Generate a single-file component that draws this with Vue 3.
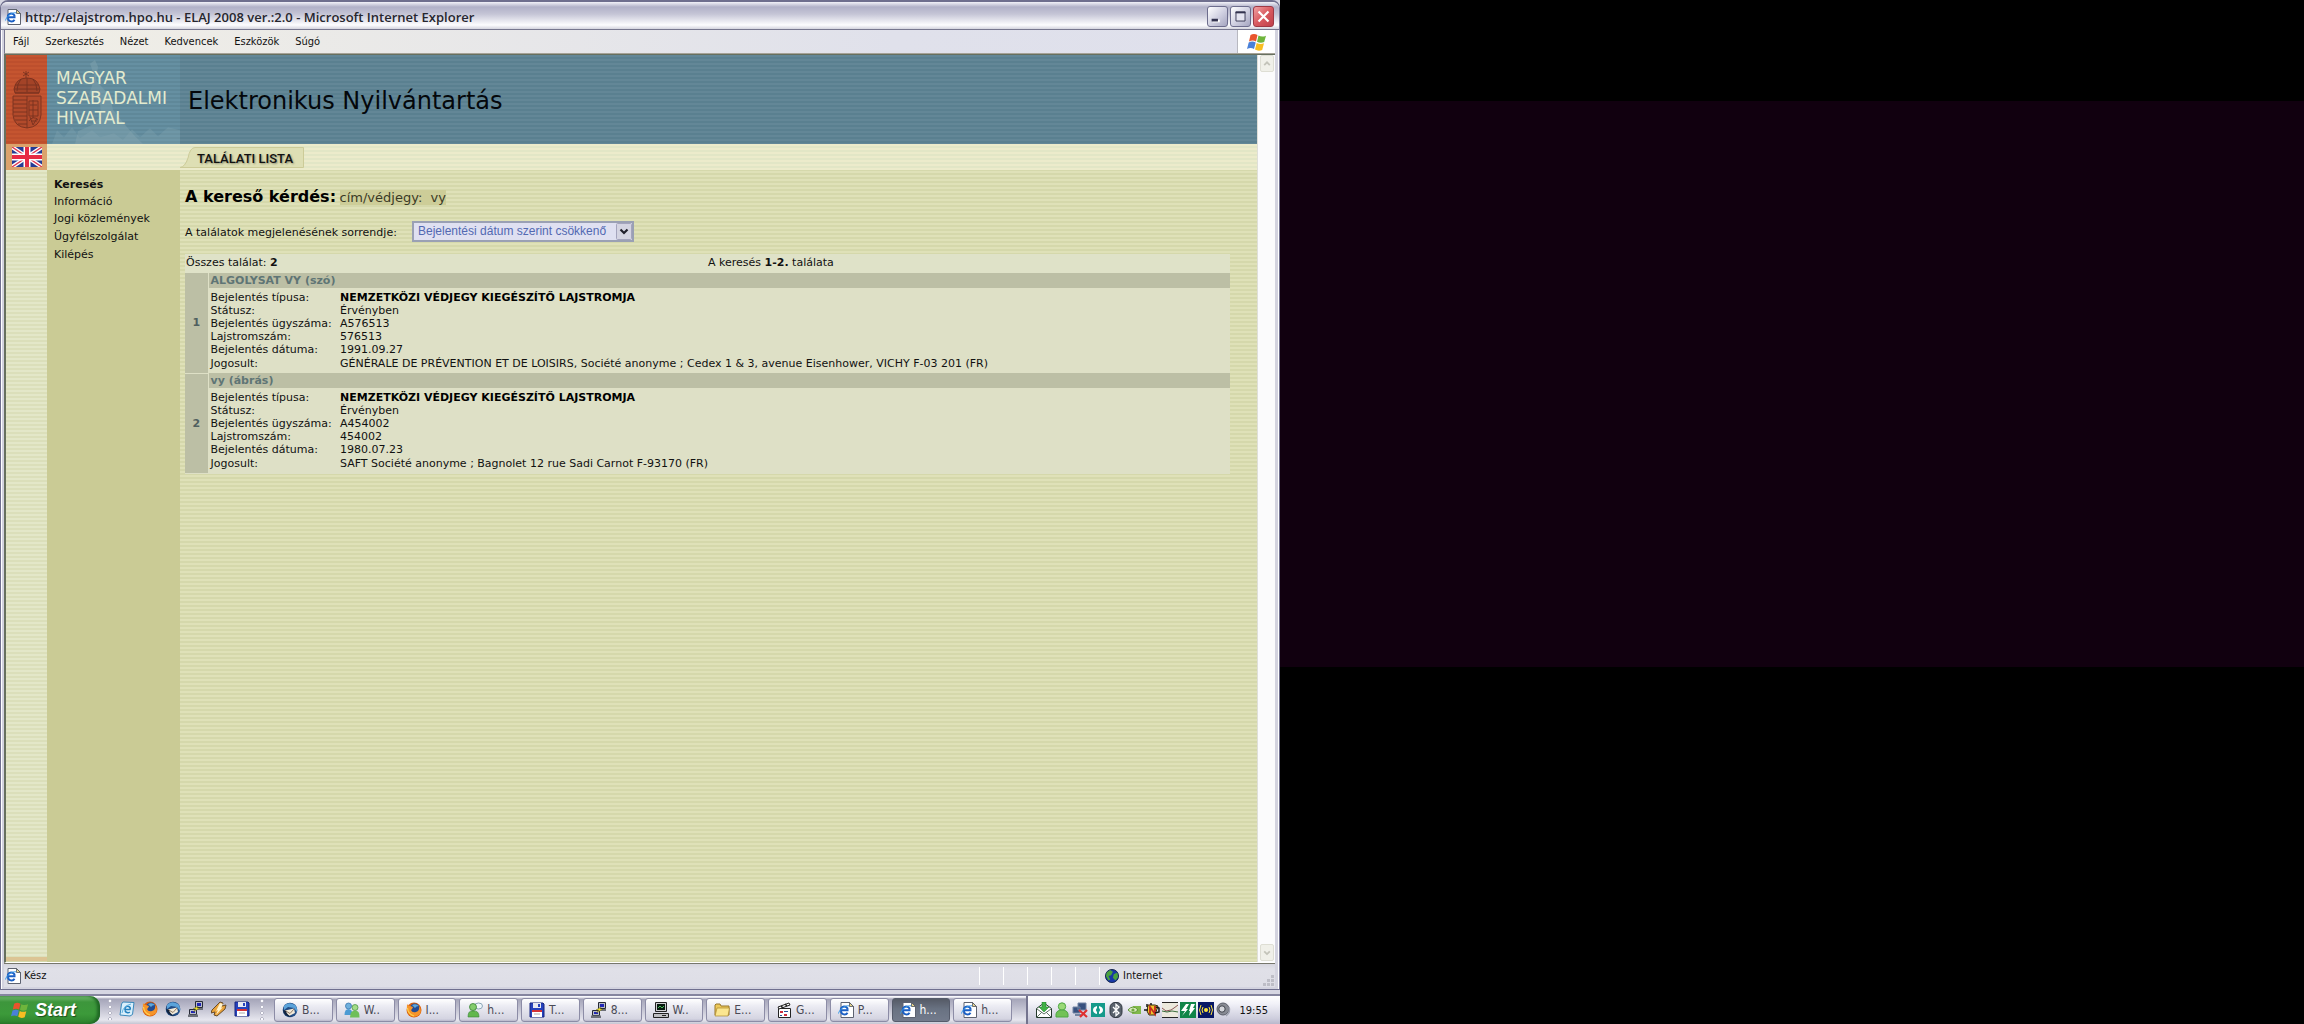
<script setup>
import { ref } from 'vue'

const menus = ['Fájl', 'Szerkesztés', 'Nézet', 'Kedvencek', 'Eszközök', 'Súgó']
const nav = ['Keresés', 'Információ', 'Jogi közlemények', 'Ügyfélszolgálat', 'Kilépés']
const order = ref('desc')

const results = [
  {
    title: 'ALGOLYSAT VY (szó)',
    rows: [
      ['Bejelentés típusa:', 'NEMZETKÖZI VÉDJEGY KIEGÉSZÍTŐ LAJSTROMJA'],
      ['Státusz:', 'Érvényben'],
      ['Bejelentés ügyszáma:', 'A576513'],
      ['Lajstromszám:', '576513'],
      ['Bejelentés dátuma:', '1991.09.27'],
      ['Jogosult:', 'GÉNÉRALE DE PRÉVENTION ET DE LOISIRS, Société anonyme ; Cedex 1 & 3, avenue Eisenhower, VICHY F-03 201 (FR)'],
    ],
  },
  {
    title: 'vy (ábrás)',
    rows: [
      ['Bejelentés típusa:', 'NEMZETKÖZI VÉDJEGY KIEGÉSZÍTŐ LAJSTROMJA'],
      ['Státusz:', 'Érvényben'],
      ['Bejelentés ügyszáma:', 'A454002'],
      ['Lajstromszám:', '454002'],
      ['Bejelentés dátuma:', '1980.07.23'],
      ['Jogosult:', 'SAFT Société anonyme ; Bagnolet 12 rue Sadi Carnot F-93170 (FR)'],
    ],
  },
]

const quick = ['outlook', 'firefox', 'bird', 'putty', 'winamp', 'floppy']
const tasks = [
  { icon: 'bird', label: 'B...' },
  { icon: 'people', label: 'W..' },
  { icon: 'firefox', label: 'I...' },
  { icon: 'chat', label: 'h...' },
  { icon: 'floppy', label: 'T...' },
  { icon: 'putty', label: '8...' },
  { icon: 'terminal', label: 'W..' },
  { icon: 'folder', label: 'E...' },
  { icon: 'clapper', label: 'G...' },
  { icon: 'page', label: 'P...' },
  { icon: 'page', label: 'h...', active: true },
  { icon: 'page', label: 'h...' },
]
const tray = ['mail', 'person', 'network', 'sync', 'bluetooth', 'nvidia', 'norton', 'chart', 'power', 'wireless', 'speaker']
</script>

<template>
  <svg class="symbols" aria-hidden="true">
    <symbol id="page" viewBox="0 0 16 16">
      <path d="M3 .5h8.500L15.500 4.500v11H3z" fill="#fff" stroke="#5d6270" />
      <path d="M11.500.500v4h4z" fill="#e6d58c" stroke="#4c525e" stroke-width=".8" />
      <path d="M10.500 8.200H2.800a3.400 3.400 0 1 1 6.900-.6M3 9.400a3.500 3.500 0 0 0 6.500 1.300" fill="none" stroke="#1b5fc4" stroke-width="2" />
      <path d="M.5 11.500C1 8 7 3 11 3.800" fill="none" stroke="#3b9be8" />
    </symbol>
    <symbol id="windows" viewBox="0 0 20 18">
      <path d="M3.500 2q3.500-2 7 0L9 8.500q-3.300-2-7 0z" fill="#e9542c" />
      <path d="M11.500 2.500q3.500 2 7.500.2L17.200 9q-3.700 1.700-7.200-.3z" fill="#6fb53c" />
      <path d="M1.700 9.600q3.600-2 7 0L7 16q-3.300-2-7 0z" fill="#4a80d8" />
      <path d="M9.700 10q3.500 2 7.300.3L15.200 17q-3.700 1.700-7.200-.4z" fill="#f8bd22" />
    </symbol>
    <symbol id="outlook" viewBox="0 0 16 16">
      <path d="M4 1l11 .5-1.500 12L11 15 1 14 2.500 3z" fill="#d9effb" stroke="#3988bb" />
      <path d="M11.500 8.500H6a2.700 2.700 0 1 1 5.300-.2M6 9.500a3 3 0 0 0 4.800 1.500" fill="none" stroke="#2581bf" stroke-width="1.600" />
      <path d="M3 12Q4 5 12 3" fill="none" stroke="#61b4e3" />
    </symbol>
    <symbol id="firefox" viewBox="0 0 16 16">
      <circle cx="8" cy="8" r="7.500" fill="#d9600e" />
      <circle cx="8.800" cy="6.500" r="5" fill="#244c92" />
      <path d="M6 3q4-2 7 1-3 0-4 2z" fill="#5da8dc" />
      <path d="M1 2q1 2 3 2l3 1-1 2-1 1q1 3 5 2 4-1 3-6 3 4 1 8-4 4-9 2Q0 11 1 2z" fill="#f6942a" />
      <path d="M1.500 6Q2 12 8 14" fill="none" stroke="#ffd34c" stroke-width="1.200" />
    </symbol>
    <symbol id="bird" viewBox="0 0 16 16">
      <circle cx="8" cy="8" r="7.300" fill="#224d86" />
      <path d="M2 4Q6-1 13 3q3 3 2 7l-3-4-6-1-4 3z" fill="#5ba3da" />
      <path d="M3 8.500l9-2 1 4.500-6 3-4-3z" fill="#f1ead9" />
      <path d="M3 8.500l5 3L12 7" fill="none" stroke="#917a66" />
      <path d="M1 8q1 7 9 7-5-2-6-6z" fill="#12233d" />
    </symbol>
    <symbol id="putty" viewBox="0 0 16 16">
      <path d="M7.500.5h7v6h-7zM1.500 8.500h7v5h-7z" fill="#b9bdc8" stroke="#262a36" />
      <path d="M9 2h4v3H9zM3 10h4v2H3z" fill="#2026b7" />
      <path d="M9 7h6v2H9zM0 13.500h10V16H0z" fill="#6d7079" />
      <path d="M10 5L5 8h3l-3 3 7-4H9z" fill="#f4e72b" stroke="#53501b" stroke-width=".4" />
    </symbol>
    <symbol id="winamp" viewBox="0 0 16 16">
      <path d="M9 1l3 1-1 3 4-1-1 4-8 7-3-1 1-3-4 1 1-3z" fill="#eaa33a" stroke="#674c2b" />
      <path d="M9 2L5 10l2-1-2 5 7-8-2 1 2-4z" fill="#fff2cc" />
    </symbol>
    <symbol id="floppy" viewBox="0 0 16 16">
      <path d="M1 1h13l1 1v13H1z" fill="#2642bd" stroke="#16257e" />
      <path d="M4 1h8v5H4z" fill="#e7e9f2" /><path d="M9 2h2v3H9z" fill="#2642bd" />
      <path d="M3 8h10v7H3z" fill="#fff" /><path d="M3 8h10v2H3z" fill="#d33336" />
      <path d="M5 12h6" stroke="#aaa" />
    </symbol>
    <symbol id="people" viewBox="0 0 16 16">
      <circle cx="4.500" cy="4" r="3" fill="#6fb0dd" stroke="#2d6da8" stroke-width=".7" />
      <path d="M.5 13q0-6 4-6t4 6z" fill="#4c9bd3" />
      <circle cx="11" cy="5.500" r="3" fill="#a3dc87" stroke="#3d8b38" stroke-width=".7" />
      <path d="M6 15.500q0-7 5-7t4.500 7z" fill="#6fbf59" />
    </symbol>
    <symbol id="chat" viewBox="0 0 16 16">
      <ellipse cx="11.500" cy="4" rx="4" ry="3" fill="#eff6fb" stroke="#8ba6b8" />
      <circle cx="6" cy="5" r="3.500" fill="#83cc6d" stroke="#398337" stroke-width=".8" />
      <path d="M1 15q0-7 5-6 6-1 6 6z" fill="#62b74d" stroke="#398337" stroke-width=".6" />
    </symbol>
    <symbol id="terminal" viewBox="0 0 16 16">
      <path d="M2.500.5h11v9h-11z" fill="#cdcdd0" stroke="#222" />
      <path d="M4 2h8v6H4z" fill="#07190e" /><path d="M5 6l2-2 2 2 2-2" fill="none" stroke="#48bc57" />
      <path d="M.5 11.500h15v4H.5z" fill="#bfbfc2" stroke="#222" /><path d="M9 13.500h4" stroke="#222" />
    </symbol>
    <symbol id="folder" viewBox="0 0 16 16">
      <path d="M1 3l1-1h4l1 2h8v9H1z" fill="#edc95b" stroke="#96762a" />
      <path d="M3 6h12.500L14 14H1z" fill="#fbe68f" stroke="#a9872e" stroke-width=".7" />
    </symbol>
    <symbol id="clapper" viewBox="0 0 16 16">
      <path d="M2.500 6.500h12v9h-12z" fill="#fff" stroke="#222" />
      <path d="M2 5l11-4 1 2L3 7z" fill="#fff" stroke="#222" /><path d="M5 4l2 2m2-4l2 2" stroke="#222" stroke-width="1.500" />
      <path d="M4 9h3v2H4zm4 3h3v2H8z" fill="#ce2d3e" /><path d="M8 9h4v1H8zM4 13h2v1H4z" fill="#285199" />
    </symbol>
    <symbol id="globe" viewBox="0 0 16 16">
      <circle cx="8" cy="8" r="7.500" fill="#1838a8" stroke="#0b1c43" />
      <path d="M2 4l4-3 3 2-2 4-3 1 2 4-2 1L1 8zM10 6l4-2 1 5-3 4-3-3z" fill="#4aa23e" />
    </symbol>
    <symbol id="mail" viewBox="0 0 16 16">
      <path d="M.5 6.500L8 1l7.500 5.500v9H.5z" fill="#fff" stroke="#22382a" />
      <path d="M1 15l5-5M15 15l-5-5M1 7l7 5 7-5" fill="none" stroke="#637568" />
      <path d="M6 0h4v5h3L8 10 3 5h3z" fill="#40b147" stroke="#187b25" stroke-width=".5" />
    </symbol>
    <symbol id="person" viewBox="0 0 16 16">
      <circle cx="8" cy="4.500" r="3.700" fill="#9ad978" stroke="#4ea745" />
      <path d="M2 15q-1-7 6-7t6 7z" fill="#72c257" stroke="#4ea745" />
    </symbol>
    <symbol id="network" viewBox="0 0 16 16">
      <path d="M6 1h8v7H6zM1 5h7v6H1z" fill="#37507f" stroke="#7384a4" />
      <path d="M3 12h6v2H3z" fill="#7485a2" />
      <path d="M7 8l8 7m0-7l-7 7" stroke="#de3131" stroke-width="2.200" />
    </symbol>
    <symbol id="sync" viewBox="0 0 16 16">
      <path d="M1 1h14v14H1z" fill="#159a8b" />
      <path d="M7 4Q3 5 3 8t4 4v-2Q5 8 7 6zM9 4q4 1 4 4t-4 4v-2q2-2 0-4z" fill="#fff" />
    </symbol>
    <symbol id="bluetooth" viewBox="0 0 16 16">
      <rect x="2" y=".5" width="12" height="15" rx="5" fill="#59616c" stroke="#333a43" />
      <path d="M5 5l6 6-3 2.500V2.500L11 5l-6 6" fill="none" stroke="#fff" stroke-width="1.300" />
    </symbol>
    <symbol id="nvidia" viewBox="0 0 16 16">
      <path d="M7 4h8v8H6z" fill="#80b94b" />
      <path d="M2 8q5-6 10 0-5 5-10 0z" fill="#d7eabd" stroke="#639936" />
      <circle cx="7" cy="8" r="1.600" fill="#6fa83d" />
    </symbol>
    <symbol id="norton" viewBox="0 0 16 16">
      <path d="M4 3h7l3 1-3 9H5L3 9z" fill="#f1c62d" stroke="#372812" />
      <path d="M6 12V5l5 7V4" fill="none" stroke="#c42a20" stroke-width="1.800" />
      <path d="M0 8h4M3 2v3M7 1v2M12 5l3 1v4l-4 1" stroke="#171717" stroke-width="1.500" fill="none" />
    </symbol>
    <symbol id="chart" viewBox="0 0 16 16">
      <path d="M0 0h16v16H0z" fill="#ece9dd" /><path d="M0 .5h16M0 15.500h16" stroke="#242424" />
      <path d="M0 6l4 3 5-1 3-2 4-3" fill="none" stroke="#8b5656" />
      <path d="M0 9l5 1 5-1 6 1" fill="none" stroke="#3a6b3d" />
    </symbol>
    <symbol id="power" viewBox="0 0 16 16">
      <path d="M0 0h16v16H0z" fill="#108548" />
      <path d="M6 2L1 9h4l-3 5 6-7H6l3-5zM11 2h4l-2 4h2l-6 8 1-5H9z" fill="#fff" />
    </symbol>
    <symbol id="wireless" viewBox="0 0 16 16">
      <path d="M0 0h16v16H0z" fill="#071765" /><circle cx="8" cy="8" r="2" fill="#ffe53a" />
      <path d="M5 5Q3 8 5 11M11 5q2 3 0 6M3 3q-3 5 0 10M13 3q3 5 0 10" fill="none" stroke="#ffe53a" />
    </symbol>
    <symbol id="speaker" viewBox="0 0 16 16">
      <circle cx="7" cy="7" r="6" fill="#888b94" stroke="#5b5e69" />
      <circle cx="6" cy="7" r="3.200" fill="#d5d7dd" stroke="#3e414a" />
      <path d="M13 5q2 5-3 9" fill="none" stroke="#a0a3b1" stroke-width="1.500" />
    </symbol>
  </svg>

  <div class="screens">
    <div class="desktop">
      <section class="window">
        <header class="titlebar">
          <svg class="app-icon"><use href="#page" /></svg>
          <h1>http://elajstrom.hpo.hu - ELAJ 2008 ver.:2.0 - Microsoft Internet Explorer</h1>
          <button class="ctl" aria-label="Kis méret"><svg viewBox="0 0 21 21"><path d="M5 14h8v3H5z" fill="#fff" /><path d="M4 13h7v3H4z" fill="#33334f" /></svg></button>
          <button class="ctl" aria-label="Teljes méret"><svg viewBox="0 0 21 21"><path d="M5.500 5.500h10v10h-10z" fill="#e4e4f0" stroke="#33334f" /><path d="M5 6h11" stroke="#33334f" stroke-width="2" /></svg></button>
          <button class="ctl close" aria-label="Bezárás"><svg viewBox="0 0 21 21"><path d="M5 5l11 11M16 5L5 16" stroke="#fff" stroke-width="2.400" /></svg></button>
        </header>

        <div class="menubar">
          <nav class="menus"><button v-for="m in menus" :key="m">{{ m }}</button></nav>
          <div class="brand"><svg><use href="#windows" /></svg></div>
        </div>

        <div class="viewport">
          <div class="page">
            <div class="crest">
              <svg viewBox="0 0 30 58">
                <g fill="none" stroke="#77311f" stroke-width=".9">
                  <path d="M11 1l6 4M14 0v7M11 5l6-4" />
                  <path d="M2 18Q4 7 15 7t13 11l-1 4H3z" fill="#a34327" />
                  <path d="M3 14h24M2 18h26M9 8q-4 5-4 12M15 7v14M21 8q4 5 4 12M3 22h24" />
                  <path d="M1 25h28v19q-1 12-14 13Q2 56 1 44z" fill="#b24a2b" />
                  <path d="M15 25v32M1 29h14M1 33h14M1 37h14M1 41h14M2 45h13M3 49h12M6 53h9" />
                  <path d="M21 29v18M18 34h7M17 39h9M17 50q4-6 9-1M18 46l3 8 4-7M17 30h9v15h-9zM19 50h6" />
                </g>
              </svg>
            </div>
            <div class="logo">
              <svg class="statue" viewBox="0 0 133 91" preserveAspectRatio="none" aria-hidden="true">
                <path d="M43 9l5-4 3 7-2 14 14 16 3 14 10 13 12 14 8 8H28l3-13 15-7 8-8-1-15-11-8 6-17z" fill="#86a8b0" opacity=".42" />
                <path d="M5 91l5-14 7 7 8-10 8 11 12-8 8 7 14-4 9 7 9-11 8 8 10-9 8 8 10-9 12 3v14z" fill="#8aa8b2" opacity=".28" />
              </svg>
              <p>MAGYAR<br />SZABADALMI<br />HIVATAL</p>
            </div>
            <h2 class="heading">Elektronikus Nyilvántartás</h2>

            <a class="flag" href="#" aria-label="English">
              <svg viewBox="0 0 30 20">
                <path d="M0 0h30v20H0z" fill="#243b94" />
                <path d="M0 0l30 20M30 0L0 20" stroke="#fff" stroke-width="4" />
                <path d="M0 0l30 20M30 0L0 20" stroke="#df3450" stroke-width="1.400" />
                <path d="M15 0v20M0 10h30" stroke="#fff" stroke-width="7" />
                <path d="M15 0v20M0 10h30" stroke="#e62b45" stroke-width="4" />
              </svg>
            </a>
            <div class="tabs">
              <div class="tab">
                <svg viewBox="0 0 124 21" preserveAspectRatio="none"><path d="M0 20.500Q5 20 8 11 10 .5 15 .5h108.500v20z" fill="#dedfb4" stroke="#cccb98" /></svg>
                <span>TALÁLATI LISTA</span>
              </div>
            </div>

            <div class="margin"></div>
            <nav class="side"><a v-for="n in nav" :key="n" href="#">{{ n }}</a></nav>

            <main class="content">
              <p class="query"><strong>A kereső kérdés:</strong> <mark>cím/védjegy: &nbsp;vy</mark></p>
              <div class="sort">
                <label for="order">A találatok megjelenésének sorrendje:</label>
                <div class="pick">
                  <select id="order" v-model="order"><option value="desc">Bejelentési dátum szerint csökkenő</option></select>
                  <svg viewBox="0 0 16 17" aria-hidden="true"><rect x=".5" y=".5" width="15" height="16" rx="1" fill="#d4d4e2" stroke="#a4a4bd" /><path d="M4.500 6.500L8 10l3.500-3.500" fill="none" stroke="#20202c" stroke-width="2.200" /></svg>
                </div>
              </div>
              <div class="summary">
                <span>Összes találat: <b>2</b></span>
                <span>A keresés <b>1-2.</b> találata</span>
              </div>
              <table class="results">
                <tbody v-for="(r, i) in results" :key="r.title">
                  <tr><th class="num" rowspan="7" scope="rowgroup">{{ i + 1 }}</th><th class="title" colspan="2">{{ r.title }}</th></tr>
                  <tr v-for="row in r.rows" :key="row[0]"><td>{{ row[0] }}</td><td>{{ row[1] }}</td></tr>
                </tbody>
              </table>
            </main>
          </div>
          <div class="scrollbar">
            <button aria-label="Fel"><svg viewBox="0 0 15 16"><path d="M4 10l3.500-3.500L11 10" fill="none" stroke="#c3c3b9" stroke-width="2.200" /></svg></button>
            <button aria-label="Le"><svg viewBox="0 0 15 16"><path d="M4 6.500L7.500 10 11 6.500" fill="none" stroke="#c3c3b9" stroke-width="2.200" /></svg></button>
          </div>
        </div>

        <footer class="status">
          <svg class="app-icon"><use href="#page" /></svg>
          <span class="msg">Kész</span>
          <i v-for="n in 5" :key="n"></i>
          <span class="zone"><svg><use href="#globe" /></svg>Internet</span>
          <svg class="grip" viewBox="0 0 12 12"><path d="M8 0h3v3H8zM4 4h3v3H4zM8 4h3v3H8zM0 8h3v3H0zM4 8h3v3H4zM8 8h3v3H8z" fill="#bdbdc6" /></svg>
        </footer>
      </section>

      <div class="taskbar">
        <button class="start"><svg><use href="#windows" /></svg>Start</button>
        <div class="quick">
          <button v-for="q in quick" :key="q" :aria-label="q"><svg><use :href="'#' + q" /></svg></button>
        </div>
        <div class="tasks">
          <button v-for="(t, i) in tasks" :key="i" :class="{ active: t.active }"><svg><use :href="'#' + t.icon" /></svg>{{ t.label }}</button>
        </div>
        <div class="tray">
          <svg v-for="t in tray" :key="t"><use :href="'#' + t" /></svg>
          <time>19:55</time>
        </div>
      </div>
    </div>
    <div class="second"></div>
  </div>
</template>

<style>
html, body { background: #000; }
</style>

<style scoped>
* { box-sizing: border-box; }
h1, h2, p { margin: 0; }
button { padding: 0; border: 0; background: none; font: inherit; color: inherit; }
svg { display: block; flex: none; }
a { color: inherit; text-decoration: none; }
.symbols { position: absolute; width: 0; height: 0; }

.screens { display: grid; grid-template-columns: 5fr 4fr; min-height: 100vh; background: #000; }
.desktop { display: flex; flex-direction: column; min-width: 0; font: 11px/13px "DejaVu Sans Condensed", "DejaVu Sans", sans-serif; color: #111; background: #d6d6e2; }
.second { margin: 101px 0 357px; background: #11000f; }

.window { flex: 1; display: flex; flex-direction: column; margin-bottom: 4px; border: solid #6f6f8e; border-width: 2px 1px 1px; border-radius: 8px 8px 0 0; background: #d3d3df; padding: 0 4px 2px 3px; box-shadow: inset 1px 0 #fff, inset -1px 0 #fff; }
.titlebar { display: flex; align-items: center; gap: 2px; height: 28px; margin: 0 -4px 0 -3px; padding: 2px 5px 0 4px; border-radius: 6px 6px 0 0; border-bottom: 1px solid #77778f; background: linear-gradient(#f2f2f8, #b1b1c8 5px, #c5c5d6 12px, #fdfdff 23px, #d4d4de); }
.app-icon { width: 16px; height: 16px; }
h1 { flex: 1; margin-left: 2px; font: 600 13px/20px "Open Sans", sans-serif; color: #26262e; white-space: nowrap; }
.ctl { width: 21px; height: 21px; border: 1px solid #6d6d8d; border-radius: 3px; background: linear-gradient(135deg, #fff, #d3d3e3 50%, #a5a5c0); }
.ctl svg { width: 19px; height: 19px; }
.ctl.close { border-color: #9e3945; background: linear-gradient(135deg, #f0a0a2, #d95a60 50%, #c0404a); }

.menubar { display: flex; height: 24px; background: linear-gradient(90deg, #f1efe6, #e0e1eb 70%, #dfe0ec); border-left: 1px solid #77778f; border-bottom: 1px solid #a5a297; }
.menus { flex: 1; display: flex; gap: 16px; padding-left: 8px; }
.brand { display: flex; align-items: center; justify-content: center; width: 38px; background: #fff; border-left: 1px solid #b8b8c0; }
.brand svg { width: 20px; height: 18px; }

.viewport { flex: 1; display: flex; border: solid #67705f; border-width: 1px 0 0 2px; border-bottom: 1px solid #fff; }
.page {
  flex: 1; min-width: 0; display: grid; grid-template-columns: 41px 133px 1fr; grid-template-rows: 89px 26px 1fr;
  background: repeating-linear-gradient(#dfe1b8 0 2px, #d5d8ab 2px 4px);
  font-family: "DejaVu Sans", sans-serif;
}
.crest { display: flex; align-items: center; justify-content: center; background: repeating-linear-gradient(#c55530 0 2px, #bd4f2d 2px 4px); }
.crest svg { width: 30px; height: 58px; }
.logo { position: relative; padding: 13px 0 0 9px; background: repeating-linear-gradient(#6690a2 0 2px, #5f8899 2px 4px); }
.logo p { position: relative; font-size: 17px; line-height: 20px; color: #e3ebcf; }
.statue { position: absolute; inset: 0; width: 100%; height: 100%; }
.heading { display: flex; align-items: center; padding: 3px 0 0 8px; font-size: 24px; font-weight: 400; color: #04070b; background: repeating-linear-gradient(#638797 0 2px, #5a8090 2px 4px); }
.flag { display: flex; align-items: center; justify-content: center; background: #dba36c; }
.flag svg { width: 30px; height: 20px; }
.tabs { grid-column: 2 / 4; padding: 3px 0 0 133px; background: repeating-linear-gradient(#ecebcb 0 2px, #e2e6c6 2px 4px); }
.tab { position: relative; width: 124px; height: 21px; }
.tab svg { position: absolute; inset: 0; width: 100%; height: 100%; }
.tab span { position: relative; display: block; padding-left: 17px; font: 500 13px/23px Roboto, sans-serif; color: #111; text-shadow: 1px 1px 2px #8d8d70; white-space: nowrap; }
.margin { margin-bottom: 1px; border-bottom: 4px solid #dcc494; background: repeating-linear-gradient(#e3e7c8 0 2px, #dbdfba 2px 4px); }
.side { display: flex; flex-direction: column; padding: 6px 0 0 7px; background: #cacb95; line-height: 18px; }
.side a:first-child { font-weight: 700; line-height: 17px; }
.side a:nth-child(2) { line-height: 17px; }

.content { padding: 16px 27px 0 5px; }
.query { line-height: 22px; color: #000; }
.query strong { font-size: 16px; }
.query mark { font-size: 13px; line-height: 15px; color: #3a3a26; background: #cdcd98; }
.sort { display: flex; align-items: center; gap: 5px; height: 22px; margin-top: 10px; }
.sort label { width: 222px; padding-top: 3px; white-space: nowrap; }
.pick { position: relative; }
.pick select { appearance: none; display: block; width: 222px; height: 21px; padding: 0 0 0 4px; border: 2px solid #9aa0b4; border-radius: 0; outline: 0; background: #dfe0f1; color: #5269b2; font: 12px/17px "Liberation Sans", sans-serif; }
.pick svg { position: absolute; top: 2px; right: 2px; width: 16px; height: 17px; pointer-events: none; }
.summary { display: grid; grid-template-columns: 1fr 1fr; height: 19px; margin-top: 12px; padding-left: 1px; line-height: 17px; background: #dfe2c8; }
.results { width: 100%; border-collapse: collapse; background: #dee0c6; }
.results td, .results th { padding: 0 1px; text-align: left; vertical-align: top; height: 13px; line-height: 13px; }
.results .num { width: 23px; text-align: center; vertical-align: middle; color: #50605f; background: #bcbfa5; border-right: 1px solid #dee0c6; border-bottom: 1px solid #dee0c6; }
.results .title { height: 15px; line-height: 15px; padding-left: 2px; color: #5f7575; background: #bcbfa5; }
.results td:first-child { width: 131px; padding-left: 2px; white-space: nowrap; }
.results tr:nth-child(2) td { height: 16px; padding-top: 3px; }
.results tr:nth-child(2) td:last-child { font-weight: 700; color: #000; }
.results tr:last-child td { height: 17px; padding-top: 1px; }

.scrollbar { display: flex; flex-direction: column; justify-content: space-between; width: 18px; padding: 0 0 1px 2px; background: #fbfbfc; border-left: 1px solid #dfdfd8; }
.scrollbar button { width: 14px; height: 17px; background: #f0f0e9; border: 1px solid #deded4; border-radius: 2px; }
.scrollbar svg { width: 12px; height: 15px; }

.status { display: flex; align-items: center; height: 24px; padding-left: 1px; border-top: 1px solid #77776c; background: linear-gradient(#d6d6de, #e0e0e8 5px, #dedee6); }
.msg { flex: 1; padding-left: 3px; }
.status i { width: 24px; height: 18px; border-left: 1px solid #fff; }
.zone { display: flex; align-items: center; gap: 4px; width: 164px; height: 18px; padding-left: 5px; border-left: 1px solid #fff; }
.zone svg { width: 14px; height: 14px; }
.grip { width: 12px; height: 12px; align-self: flex-end; }

.taskbar { display: flex; height: 30px; border-top: 2px solid #85859f; background: linear-gradient(#f8f8fc 0 1px, #a5a5b9 3px, #b9b9ca 10px, #e6e6ee 24px, #c5c5d2); }
.start { display: flex; align-items: center; gap: 6px; width: 100px; padding-left: 11px; border-radius: 0 10px 10px 0; background: linear-gradient(#75bc71, #3d963c 6px, #3c9a3a 18px, #2c812d); box-shadow: inset -3px 0 3px #1f6724; color: #fff; font: italic bold 18px/20px "Liberation Sans", sans-serif; text-shadow: 1px 1px 1px #1c4d1d; }
.start svg { width: 18px; height: 18px; }
.quick { display: flex; align-items: center; gap: 7px; width: 174px; padding: 0 13px 2px 21px; }
.quick::before, .quick::after { content: ""; width: 4px; height: 22px; flex: none; margin-left: -13px; background: radial-gradient(circle, #fbfbff 1px, #85859c 2px, transparent 2px) 0 0 / 4px 6px; }
.quick::after { margin-left: 3px; }
.quick svg { width: 16px; height: 16px; }
.tasks { flex: 1; display: flex; gap: 3px; padding: 2px 14px 2px 0; }
.tasks button { flex: 1; display: flex; align-items: center; gap: 4px; min-width: 0; padding-left: 7px; border: 1px solid #8c8ca6; border-radius: 3px; background: linear-gradient(#fff, #ececf3 7px, #d4d4e1 20px, #b7b7ca); color: #4a4a56; font-size: 12px; }
.tasks svg { width: 16px; height: 16px; }
.tasks .active { background: linear-gradient(#555a66, #697282 10px, #737b8c); border-color: #555b6b; color: #fff; }
.tray { display: flex; align-items: center; gap: 2px; width: 254px; padding: 0 12px 0 8px; border-left: 2px solid #73738e; background: linear-gradient(#fff, #f1f1f8 8px, #ccccdc 23px, #b8b8cc); }
.tray svg { width: 16px; height: 16px; }
.tray time { flex: 1; text-align: right; }
</style>
